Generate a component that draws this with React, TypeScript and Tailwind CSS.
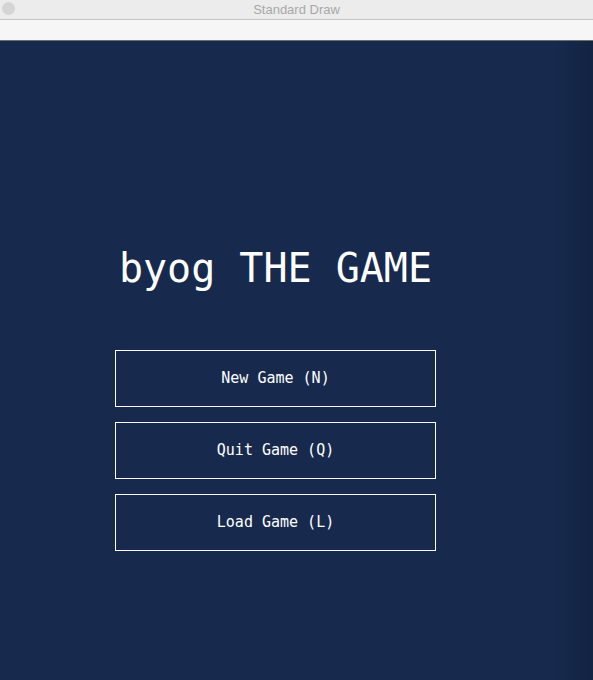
import React from "react";

const mono = { fontFamily: '"DejaVu Sans Mono", "Liberation Mono", monospace' };

function MenuButton({ label }: { label: string }) {
  return (
    <div
      className="flex h-[57px] w-[321px] items-center justify-center border border-white pb-px text-[15px] text-white"
      style={mono}
    >
      {label}
    </div>
  );
}

export default function App() {
  return (
    <div className="flex h-[680px] w-[593px] flex-col overflow-hidden bg-[#172a4e]">
      <div className="relative flex h-[19px] shrink-0 items-center justify-center bg-[#ececec]">
        <div className="absolute left-[2px] top-[2px] h-[13px] w-[13px] rounded-full bg-[#d4d4d4]" />
        <span
          className="text-[13px] leading-none text-[#a8a8a8]"
          style={{ fontFamily: '"Liberation Sans", Arial, sans-serif' }}
        >
          Standard Draw
        </span>
      </div>
      <div className="h-px shrink-0 bg-[#c6c6c6]" />
      <div className="h-[20px] shrink-0 bg-[#f6f6f6]" />
      <div className="h-px shrink-0 bg-[#6e6e6e]" />
      <div className="relative flex flex-1 flex-col">
        <div className="absolute inset-y-0 right-0 w-[40px] bg-gradient-to-r from-transparent to-[#0d1a33]/45" />
        <div className="ml-[115px] mt-[200px] flex w-[321px] flex-col items-center">
          <div className="text-[40px] leading-[54px] text-white" style={mono}>
            byog THE GAME
          </div>
          <div className="mt-[55px] flex flex-col gap-[15px]">
            <MenuButton label="New Game (N)" />
            <MenuButton label="Quit Game (Q)" />
            <MenuButton label="Load Game (L)" />
          </div>
        </div>
      </div>
    </div>
  );
}
